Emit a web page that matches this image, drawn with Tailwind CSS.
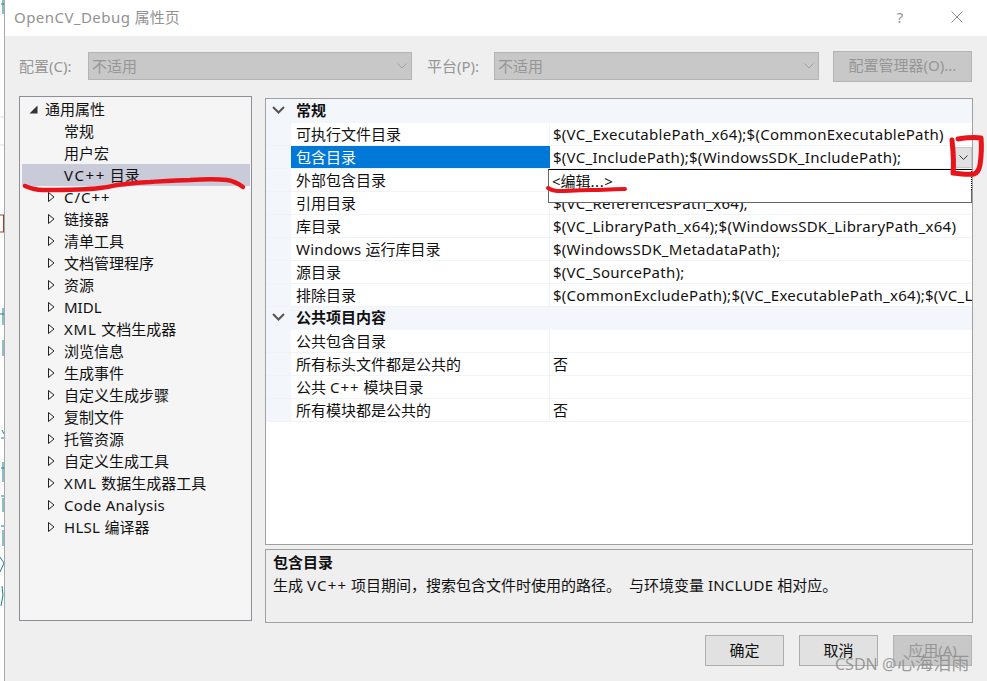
<!DOCTYPE html>
<html lang="zh-CN">

<head>
    <meta charset="UTF-8">
    <title>OpenCV_Debug 属性页</title>
    <script src="https://cdn.jsdelivr.net/npm/@tailwindcss/browser@4"></script>
</head>

<body class="m-0 w-[987px] h-[681px] overflow-hidden bg-white font-['Noto_Sans','Noto_Sans_CJK_SC',sans-serif] text-[15px] leading-[22px] text-[#111]">
    <div class="relative flex w-[987px] h-[681px]">
        <!-- what is left of the window behind the dialog -->
        <div class="w-[4px] h-full bg-white"></div>
        <div class="w-[1px] h-full bg-[#a8a8a8]"></div>

        <div class="flex flex-col w-[982px] h-full bg-[#efefef]">
            <!-- title bar -->
            <div class="flex items-center h-[36px] bg-white pl-[9px] pb-[2px] text-[#929292]">
                <span class="flex-1"><span class="tracking-[0.45px]">OpenCV_Debug </span>属性页</span>
                <span class="w-[20px] text-center mr-[41px]">?</span>
                <svg class="mr-[24px]" width="12" height="12" viewBox="0 0 12 12" fill="none" stroke="#8a8a8a" stroke-width="1">
                    <path d="M0.5 0.5L11.5 11.5M11.5 0.5L0.5 11.5" />
                </svg>
            </div>

            <!-- config row -->
            <div class="flex items-center h-[32px] mt-[14px] pl-[14px] text-[#969696]">
                <span class="w-[69px]">配置(C):</span>
                <div class="flex items-center justify-between w-[324px] h-[28px] bg-[#c8c8c8] border border-[#b4b4b4] pl-[3px] pr-[4px] pb-[1px]">
                    <span>不适用</span>
                    <svg width="10" height="6" viewBox="0 0 10 6" fill="none" stroke="#a0a0a0"><path d="M0.5 0.5L5 5L9.5 0.5" /></svg>
                </div>
                <span class="w-[67px] ml-[15px]">平台(P):</span>
                <div class="flex items-center justify-between w-[325px] h-[28px] bg-[#c8c8c8] border border-[#b4b4b4] pl-[3px] pr-[4px] pb-[1px]">
                    <span>不适用</span>
                    <svg width="10" height="6" viewBox="0 0 10 6" fill="none" stroke="#a0a0a0"><path d="M0.5 0.5L5 5L9.5 0.5" /></svg>
                </div>
                <div class="flex items-center justify-center w-[139px] h-[31px] ml-[14px] pb-[3px] bg-[#c8c8c8] border border-[#b4b4b4]">配置管理器(O)...</div>
            </div>

            <!-- tree + grid -->
            <div class="flex mt-[14px] pl-[14px]">
                <div class="flex flex-col w-[233px] h-[525px] border border-[#8e8e96] bg-[#f5f5f5] pt-[1px] pl-[2px] pr-[1px]">
                    <div class="flex items-center h-[22px] pl-[7px]">
                        <svg width="9" height="9" viewBox="0 0 9 9"><path d="M8.5 0.5V8.5H0.5Z" fill="#333" /></svg>
                        <span class="ml-[7px]">通用属性</span>
                    </div>
                    <div class="h-[22px] pl-[42px]">常规</div>
                    <div class="h-[22px] pl-[42px]">用户宏</div>
                    <div class="h-[22px] pl-[42px] bg-[#c9cbd8]"><span class="tracking-[1.6px]">VC++</span> 目录</div>
                    <div class="flex items-center h-[22px] pl-[26px]">
                        <svg width="7" height="10" viewBox="0 0 7 10" fill="none" stroke="#222"><path d="M0.5 0.5L6 5L0.5 9.5Z" /></svg>
                        <span class="ml-[9px] tracking-[1px]">C/C++</span>
                    </div>
                    <div class="flex items-center h-[22px] pl-[26px]">
                        <svg width="7" height="10" viewBox="0 0 7 10" fill="none" stroke="#222"><path d="M0.5 0.5L6 5L0.5 9.5Z" /></svg>
                        <span class="ml-[9px]">链接器</span>
                    </div>
                    <div class="flex items-center h-[22px] pl-[26px]">
                        <svg width="7" height="10" viewBox="0 0 7 10" fill="none" stroke="#222"><path d="M0.5 0.5L6 5L0.5 9.5Z" /></svg>
                        <span class="ml-[9px]">清单工具</span>
                    </div>
                    <div class="flex items-center h-[22px] pl-[26px]">
                        <svg width="7" height="10" viewBox="0 0 7 10" fill="none" stroke="#222"><path d="M0.5 0.5L6 5L0.5 9.5Z" /></svg>
                        <span class="ml-[9px]">文档管理程序</span>
                    </div>
                    <div class="flex items-center h-[22px] pl-[26px]">
                        <svg width="7" height="10" viewBox="0 0 7 10" fill="none" stroke="#222"><path d="M0.5 0.5L6 5L0.5 9.5Z" /></svg>
                        <span class="ml-[9px]">资源</span>
                    </div>
                    <div class="flex items-center h-[22px] pl-[26px]">
                        <svg width="7" height="10" viewBox="0 0 7 10" fill="none" stroke="#222"><path d="M0.5 0.5L6 5L0.5 9.5Z" /></svg>
                        <span class="ml-[9px]">MIDL</span>
                    </div>
                    <div class="flex items-center h-[22px] pl-[26px]">
                        <svg width="7" height="10" viewBox="0 0 7 10" fill="none" stroke="#222"><path d="M0.5 0.5L6 5L0.5 9.5Z" /></svg>
                        <span class="ml-[9px]"><span class="tracking-[0.8px]">XML </span>文档生成器</span>
                    </div>
                    <div class="flex items-center h-[22px] pl-[26px]">
                        <svg width="7" height="10" viewBox="0 0 7 10" fill="none" stroke="#222"><path d="M0.5 0.5L6 5L0.5 9.5Z" /></svg>
                        <span class="ml-[9px]">浏览信息</span>
                    </div>
                    <div class="flex items-center h-[22px] pl-[26px]">
                        <svg width="7" height="10" viewBox="0 0 7 10" fill="none" stroke="#222"><path d="M0.5 0.5L6 5L0.5 9.5Z" /></svg>
                        <span class="ml-[9px]">生成事件</span>
                    </div>
                    <div class="flex items-center h-[22px] pl-[26px]">
                        <svg width="7" height="10" viewBox="0 0 7 10" fill="none" stroke="#222"><path d="M0.5 0.5L6 5L0.5 9.5Z" /></svg>
                        <span class="ml-[9px]">自定义生成步骤</span>
                    </div>
                    <div class="flex items-center h-[22px] pl-[26px]">
                        <svg width="7" height="10" viewBox="0 0 7 10" fill="none" stroke="#222"><path d="M0.5 0.5L6 5L0.5 9.5Z" /></svg>
                        <span class="ml-[9px]">复制文件</span>
                    </div>
                    <div class="flex items-center h-[22px] pl-[26px]">
                        <svg width="7" height="10" viewBox="0 0 7 10" fill="none" stroke="#222"><path d="M0.5 0.5L6 5L0.5 9.5Z" /></svg>
                        <span class="ml-[9px]">托管资源</span>
                    </div>
                    <div class="flex items-center h-[22px] pl-[26px]">
                        <svg width="7" height="10" viewBox="0 0 7 10" fill="none" stroke="#222"><path d="M0.5 0.5L6 5L0.5 9.5Z" /></svg>
                        <span class="ml-[9px]">自定义生成工具</span>
                    </div>
                    <div class="flex items-center h-[22px] pl-[26px]">
                        <svg width="7" height="10" viewBox="0 0 7 10" fill="none" stroke="#222"><path d="M0.5 0.5L6 5L0.5 9.5Z" /></svg>
                        <span class="ml-[9px]"><span class="tracking-[0.8px]">XML </span>数据生成器工具</span>
                    </div>
                    <div class="flex items-center h-[22px] pl-[26px]">
                        <svg width="7" height="10" viewBox="0 0 7 10" fill="none" stroke="#222"><path d="M0.5 0.5L6 5L0.5 9.5Z" /></svg>
                        <span class="ml-[9px] tracking-[0.3px]">Code Analysis</span>
                    </div>
                    <div class="flex items-center h-[22px] pl-[26px]">
                        <svg width="7" height="10" viewBox="0 0 7 10" fill="none" stroke="#222"><path d="M0.5 0.5L6 5L0.5 9.5Z" /></svg>
                        <span class="ml-[9px]"><span class="tracking-[0.3px]">HLSL </span>编译器</span>
                    </div>
                </div>

                <div class="flex flex-col ml-[13px] mt-[2px] w-[708px]">
                    <!-- property grid -->
                    <div class="relative flex flex-col h-[447px] border border-[#a0a0a0] bg-white">
                        <div class="flex items-center h-[24px] bg-[#f3f6fb] font-bold pl-[6px] pb-[2px]">
                            <svg width="13" height="8" viewBox="0 0 13 8" fill="none" stroke="#555" stroke-width="2"><path d="M1 1L6.5 6.5L12 1" /></svg>
                            <span class="ml-[11px]">常规</span>
                        </div>
                        <div class="flex h-[23px] border-b border-[#f0f3f8]"><div class="w-[25px] bg-[#f3f6fb]"></div><div class="w-[259px] pl-[5px] border-r border-[#f0f3f8]">可执行文件目录</div><div class="flex-1 pl-[3px] tracking-[0.27px] whitespace-nowrap overflow-hidden">$(VC_ExecutablePath_x64);$(CommonExecutablePath)</div></div>
                        <div class="flex h-[23px] border-b border-[#f0f3f8]"><div class="w-[25px] bg-[#f3f6fb]"></div><div class="w-[259px] pl-[5px] bg-[#0078d7] text-white">包含目录</div><div class="flex-1 pl-[3px] tracking-[0.27px] whitespace-nowrap overflow-hidden">$(VC_IncludePath);$(WindowsSDK_IncludePath);</div></div>
                        <div class="flex h-[23px] border-b border-[#f0f3f8]"><div class="w-[25px] bg-[#f3f6fb]"></div><div class="w-[259px] pl-[5px] border-r border-[#f0f3f8]">外部包含目录</div><div class="flex-1 pl-[3px]"></div></div>
                        <div class="flex h-[23px] border-b border-[#f0f3f8]"><div class="w-[25px] bg-[#f3f6fb]"></div><div class="w-[259px] pl-[5px] border-r border-[#f0f3f8]">引用目录</div><div class="flex-1 pl-[3px] tracking-[0.27px] whitespace-nowrap overflow-hidden">$(VC_ReferencesPath_x64);</div></div>
                        <div class="flex h-[23px] border-b border-[#f0f3f8]"><div class="w-[25px] bg-[#f3f6fb]"></div><div class="w-[259px] pl-[5px] border-r border-[#f0f3f8]">库目录</div><div class="flex-1 pl-[3px] tracking-[0.27px] whitespace-nowrap overflow-hidden">$(VC_LibraryPath_x64);$(WindowsSDK_LibraryPath_x64)</div></div>
                        <div class="flex h-[23px] border-b border-[#f0f3f8]"><div class="w-[25px] bg-[#f3f6fb]"></div><div class="w-[259px] pl-[5px] border-r border-[#f0f3f8]"><span class="tracking-[0.2px]">Windows </span>运行库目录</div><div class="flex-1 pl-[3px] tracking-[0.27px] whitespace-nowrap overflow-hidden">$(WindowsSDK_MetadataPath);</div></div>
                        <div class="flex h-[23px] border-b border-[#f0f3f8]"><div class="w-[25px] bg-[#f3f6fb]"></div><div class="w-[259px] pl-[5px] border-r border-[#f0f3f8]">源目录</div><div class="flex-1 pl-[3px] tracking-[0.27px] whitespace-nowrap overflow-hidden">$(VC_SourcePath);</div></div>
                        <div class="flex h-[23px] border-b border-[#f0f3f8]"><div class="w-[25px] bg-[#f3f6fb]"></div><div class="w-[259px] pl-[5px] border-r border-[#f0f3f8]">排除目录</div><div class="flex-1 pl-[3px] tracking-[0.27px] whitespace-nowrap overflow-hidden">$(CommonExcludePath);$(VC_ExecutablePath_x64);$(VC_L</div></div>
                        <div class="flex items-center h-[23px] bg-[#f3f6fb] font-bold pl-[6px] pb-[3px]">
                            <svg width="13" height="8" viewBox="0 0 13 8" fill="none" stroke="#555" stroke-width="2"><path d="M1 1L6.5 6.5L12 1" /></svg>
                            <span class="ml-[11px]">公共项目内容</span>
                        </div>
                        <div class="flex h-[23px] border-b border-[#f0f3f8]"><div class="w-[25px] bg-[#f3f6fb]"></div><div class="w-[259px] pl-[5px] border-r border-[#f0f3f8]">公共包含目录</div><div class="flex-1 pl-[3px]"></div></div>
                        <div class="flex h-[23px] border-b border-[#f0f3f8]"><div class="w-[25px] bg-[#f3f6fb]"></div><div class="w-[259px] pl-[5px] border-r border-[#f0f3f8]">所有标头文件都是公共的</div><div class="flex-1 pl-[3px]">否</div></div>
                        <div class="flex h-[23px] border-b border-[#f0f3f8]"><div class="w-[25px] bg-[#f3f6fb]"></div><div class="w-[259px] pl-[5px] border-r border-[#f0f3f8]">公共 <span class="tracking-[1px]">C++</span> 模块目录</div><div class="flex-1 pl-[3px]"></div></div>
                        <div class="flex h-[23px] border-b border-[#f0f3f8]"><div class="w-[25px] bg-[#f3f6fb]"></div><div class="w-[259px] pl-[5px] border-r border-[#f0f3f8]">所有模块都是公共的</div><div class="flex-1 pl-[3px]">否</div></div>

                        <!-- open combo: arrow button and its dropdown -->
                        <div class="absolute left-[689px] top-[48px] flex items-center justify-center w-[17px] h-[21px] bg-[#e1e1e1] border border-[#c8c8c8]">
                            <svg width="9" height="5" viewBox="0 0 9 5" fill="none" stroke="#333"><path d="M0.5 0.5L4.5 4.5L8.5 0.5" /></svg>
                        </div>
                        <div class="absolute left-[282px] top-[70px] w-[424px] h-[34px] bg-white border border-[#666] border-t-black border-t-dotted pl-[3px]">
                            &lt;编辑<span class="tracking-[0.5px]">...&gt;</span>
                            <div class="absolute -top-[1px] -right-[1px] h-[21px] bg-white border-r border-dotted border-black"></div>
                        </div>
                    </div>
                    <!-- description -->
                    <div class="flex flex-col h-[74px] mt-[4px] border border-[#a0a0a0] pl-[7px]">
                        <span class="font-bold mt-[1px]">包含目录</span>
                        <span class="mt-[1px]">生成 <span class="tracking-[1.2px]">VC++</span> 项目期间，搜索包含文件时使用的路径。<span class="tracking-[4px]"> </span>与环境变量 <span class="tracking-[0.2px]">INCLUDE</span> 相对应。</span>
                    </div>
                </div>
            </div>

            <!-- footer buttons -->
            <div class="flex justify-end gap-[15px] mt-[12px] pr-[15px]">
                <div class="flex items-center justify-center w-[79px] h-[31px] pb-[2px] bg-[#e1e1e1] border border-[#adadad]">确定</div>
                <div class="flex items-center justify-center w-[79px] h-[31px] pb-[2px] bg-[#e1e1e1] border border-[#adadad]">取消</div>
                <div class="flex items-center justify-center w-[79px] h-[31px] pb-[2px] bg-[#c8c8c8] border border-[#b4b4b4] text-[#969696]">应用(A)</div>
            </div>
        </div>

        <!-- scraps of the page behind, showing left of the dialog -->
        <svg class="absolute left-0 top-0 pointer-events-none" width="4" height="681" viewBox="0 0 4 681" fill="none" stroke-width="1">
            <path stroke="#d9d9e3" d="M0 117H4M0 145H4" />
            <path stroke="#a5392b" d="M3.5 215V232M0 215H4M0 232H4" />
            <path stroke="#1a7f8f" d="M3 0V14M1 4H4M3 308V325M0 314H4M3 340V356M2 430L4 434M1 438H4M3 462V482M1 468H4M1 496H4M3 498V512M1 526H4M3 530V546M0 557L4 563L0 572M2 586L3 595L1 606" />
        </svg>

        <!-- red pen marks drawn over the screenshot -->
        <svg class="absolute left-0 top-0 pointer-events-none" width="987" height="681" viewBox="0 0 987 681" fill="none" stroke="#e8141c" stroke-linecap="round" stroke-linejoin="round">
            <path stroke-width="4.5" d="M25 186C32 189 38 190 43 190C65 190 85 190 100 188C108 187 112 186 117 185C128 184 140 182 150 182C165 181 178 180 190 180C205 179 218 179 227 180C234 181 239 184 243 187" />
            <path stroke-width="4" d="M548 188C551 190 554 191 557 191C570 191 580 190 590 190C603 190 615 189 625 189" />
            <path stroke-width="5" d="M958 139C965 138 975 137 981 138C982 148 981 158 980 165C979 170 977 173 974 174C968 175 960 174 953 173C954 165 953 150 952 140" />
        </svg>

        <!-- CSDN watermark -->
        <span class="absolute left-[835px] top-[652px] text-[16px] text-[#8c8c8c]/85 whitespace-nowrap">CSDN @<span class="text-[18px] ml-[1px]">心海泪雨</span></span>
    </div>
</body>

</html>
